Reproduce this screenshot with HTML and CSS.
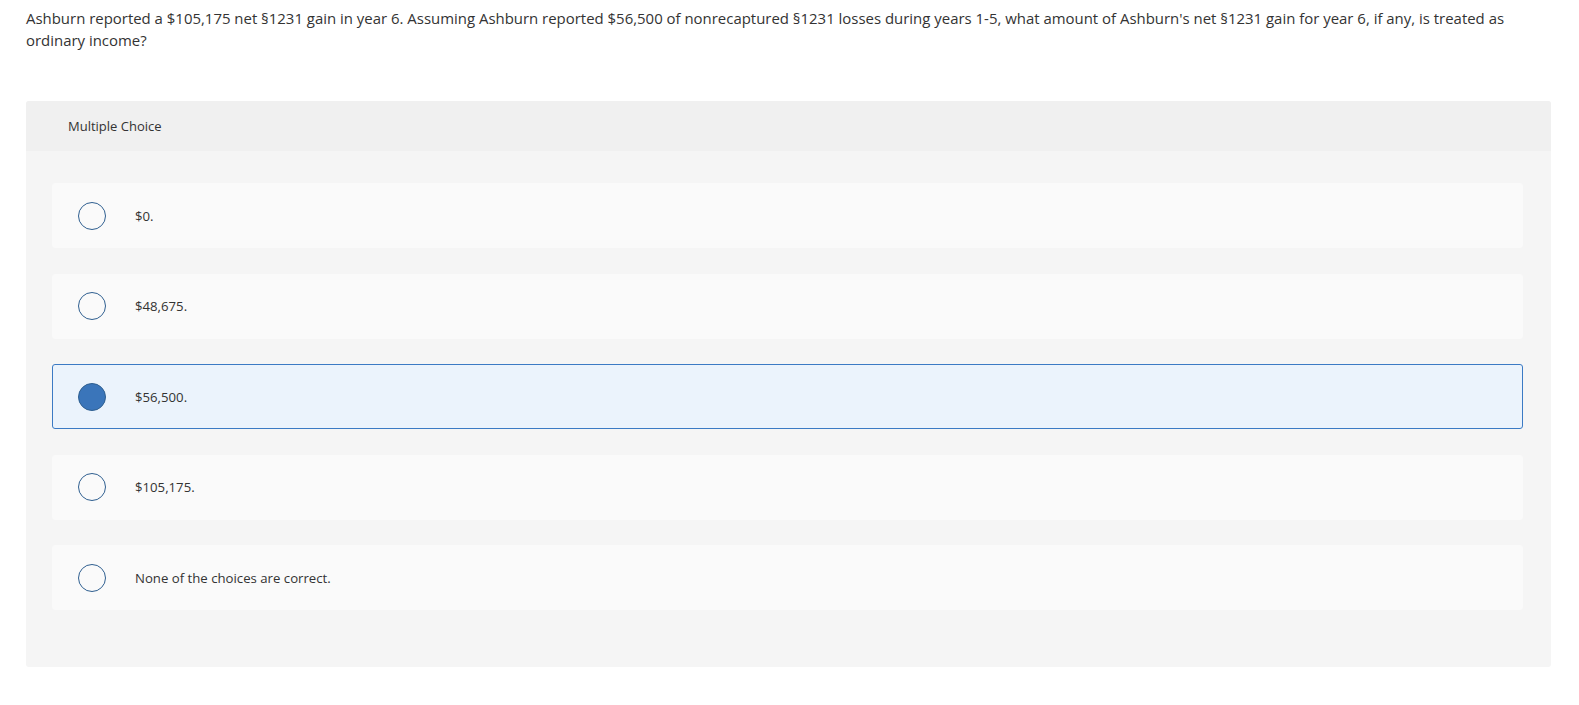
FILE: index.html
```html
<!DOCTYPE html>
<html>
<head>
<meta charset="utf-8">
<link rel="stylesheet" href="styles.css">
</head>
<body>
<div class="page">
  <p class="question">Ashburn reported a $105,175 net §1231 gain in year 6. Assuming Ashburn reported $56,500 of nonrecaptured §1231 losses during years 1-5, what amount of Ashburn's net §1231 gain for year 6, if any, is treated as ordinary income?</p>
  <div class="panel">
    <div class="panel-head">Multiple Choice</div>
    <div class="options">
      <div class="option"><span class="radio"></span><span class="label">$0.</span></div>
      <div class="option"><span class="radio"></span><span class="label">$48,675.</span></div>
      <div class="option selected"><span class="radio"></span><span class="label">$56,500.</span></div>
      <div class="option"><span class="radio"></span><span class="label">$105,175.</span></div>
      <div class="option"><span class="radio"></span><span class="label">None of the choices are correct.</span></div>
    </div>
  </div>
</div>
</body>
</html>
```
FILE: styles.css
```css
html, body {
  margin: 0;
  padding: 0;
  background: #ffffff;
}
body {
  font-family: "Open Sans", "Liberation Sans", sans-serif;
  color: #333333;
}
.page {
  padding: 7px 28px 0 26px;
}
.question {
  margin: 0;
  font-size: 14.95px;
  line-height: 22px;
  color: #333333;
  max-width: 1490px;
}
.panel {
  margin-top: 50px;
  background: #f5f5f5;
  border-radius: 3px;
  height: 566px;
}
.panel-head {
  background: #f0f0f0;
  height: 50px;
  padding-left: 42px;
  display: flex;
  align-items: center;
  font-size: 13px;
  color: #333;
  border-radius: 3px 3px 0 0;
}
.options {
  padding: 32px 28px 0 26px;
  display: flex;
  flex-direction: column;
  gap: 25.5px;
}
.option {
  height: 65px;
  background: #fafafa;
  border-radius: 3px;
  display: flex;
  align-items: center;
  padding-left: 25px;
  box-sizing: border-box;
  border: 1px solid #fafafa;
}
.option.selected {
  background: #ebf3fc;
  border: 1px solid #3b7ac4;
}
.radio {
  width: 26px;
  height: 26px;
  border: 1.5px solid #2f5f90;
  border-radius: 50%;
  background: #fafafa;
  flex: none;
}
.option.selected .radio {
  background: #3a75ba;
  border-color: #2f5f90;
}
.label {
  margin-left: 29px;
  font-size: 13.2px;
  color: #333;
}
```
